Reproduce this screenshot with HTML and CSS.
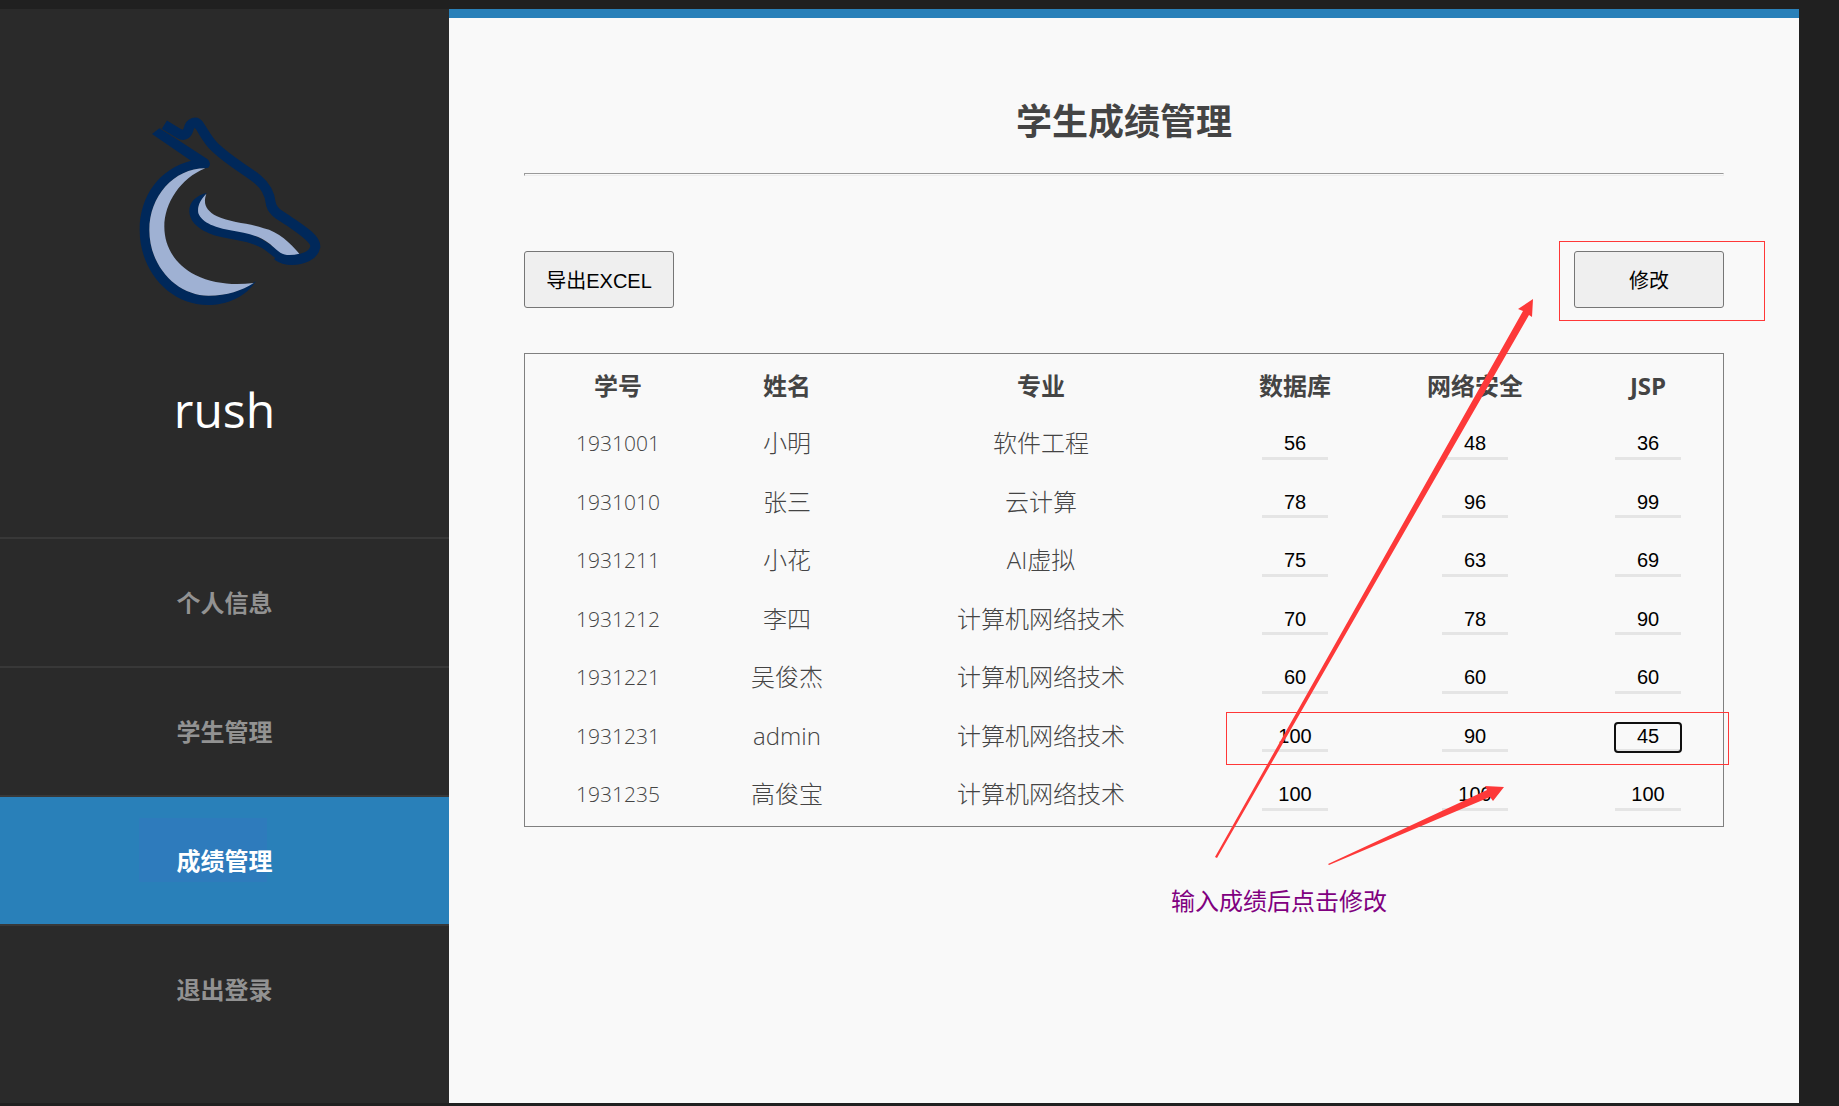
FILE: index.html
```html
<!DOCTYPE html>
<html lang="zh-CN">
<head>
<meta charset="utf-8">
<title>学生成绩管理</title>
<link rel="stylesheet" href="styles.css">
</head>
<body>
<div class="app">
  <aside class="sidebar">
    <div class="profile">
      <svg class="logo" viewBox="-16 0 660 660" aria-hidden="true">
        <path fill="#00285a" d="M95 102L118 84L262 178Q275 190 264 203L255 205C160 205 87 290 87 390C87 500 170 587 265 587C320 587 365 572 407 543C375 592 320 615 262 615C150 615 58 515 58 390C58 285 120 205 212 182Z"/>
        <path fill="#9fb1d3" d="M255 205C160 205 87 290 87 390C87 500 170 587 265 587C320 587 365 572 400 549C340 556 280 552 225 525C165 495 132 440 132 380C132 310 180 235 255 205Z"/>
        <path fill="none" stroke="#00285a" stroke-width="30" stroke-linejoin="round" d="M132 74L176 101Q195 112 204 90C210 65 228 62 238 78C252 98 262 122 285 143C330 186 375 208 412 238C435 257 448 282 451 308C454 335 482 347 505 363C545 391 586 416 585 440C580 468 545 480 515 480C495 480 484 476 470 466"/>
        <path fill="none" stroke="#2a2a2a" stroke-width="2" d="M114 82L180 122"/>
        <path fill="#00285a" d="M260 278C225 287 205 308 207 336C210 372 245 395 290 408C340 420 390 424 425 444C455 462 470 488 515 494L540 462L500 464C470 452 450 430 410 410C370 390 300 390 262 366C220 345 230 310 260 278Z"/>
        <path fill="#9fb1d3" d="M258 281C240 300 230 318 234 340C245 370 290 384 330 391C375 399 415 405 450 433C468 448 480 464 500 465Q520 466 537 461C510 430 475 395 430 385C390 370 330 368 290 349C255 330 248 310 258 281Z"/>
      </svg>
      <div class="username">rush</div>
    </div>
    <nav class="menu">
      <a href="#">个人信息</a>
      <a href="#">学生管理</a>
      <a href="#" class="active" aria-current="page">成绩管理</a>
      <a href="#">退出登录</a>
    </nav>
  </aside>
  <main class="content">
    <h1>学生成绩管理</h1>
    <hr>
    <div class="toolbar">
      <button type="button">导出EXCEL</button>
      <button type="submit" form="scores">修改</button>
    </div>
    <form id="scores">
      <table>
        <colgroup>
          <col class="col-id"><col class="col-name"><col class="col-major"><col class="col-db"><col class="col-net"><col class="col-jsp">
        </colgroup>
        <thead>
          <tr><th>学号</th><th>姓名</th><th>专业</th><th>数据库</th><th>网络安全</th><th>JSP</th></tr>
        </thead>
        <tbody>
          <tr><td class="num">1931001</td><td>小明</td><td>软件工程</td><td><input aria-label="数据库" value="56"></td><td><input aria-label="网络安全" value="48"></td><td><input aria-label="JSP" value="36"></td></tr>
          <tr><td class="num">1931010</td><td>张三</td><td>云计算</td><td><input aria-label="数据库" value="78"></td><td><input aria-label="网络安全" value="96"></td><td><input aria-label="JSP" value="99"></td></tr>
          <tr><td class="num">1931211</td><td>小花</td><td>AI虚拟</td><td><input aria-label="数据库" value="75"></td><td><input aria-label="网络安全" value="63"></td><td><input aria-label="JSP" value="69"></td></tr>
          <tr><td class="num">1931212</td><td>李四</td><td>计算机网络技术</td><td><input aria-label="数据库" value="70"></td><td><input aria-label="网络安全" value="78"></td><td><input aria-label="JSP" value="90"></td></tr>
          <tr><td class="num">1931221</td><td>吴俊杰</td><td>计算机网络技术</td><td><input aria-label="数据库" value="60"></td><td><input aria-label="网络安全" value="60"></td><td><input aria-label="JSP" value="60"></td></tr>
          <tr><td class="num">1931231</td><td>admin</td><td>计算机网络技术</td><td><input aria-label="数据库" value="100"></td><td><input aria-label="网络安全" value="90"></td><td><input class="editing" aria-label="JSP" value="45"></td></tr>
          <tr><td class="num">1931235</td><td>高俊宝</td><td>计算机网络技术</td><td><input aria-label="数据库" value="100"></td><td><input aria-label="网络安全" value="100"></td><td><input aria-label="JSP" value="100"></td></tr>
        </tbody>
      </table>
    </form>
    <svg class="marks" aria-hidden="true">
      <g fill="none" stroke="#ff3838">
        <rect x="1110.5" y="223.5" width="205" height="79"/>
        <rect x="777.5" y="694.5" width="502" height="52"/>
      </g>
      <g fill="#fd3939">
        <path d="M766 839L1074 293L1069 291L1084 281L1083 299L1080 297L768 840Z"/>
        <path d="M879 846L1038 772L1036 768L1055 769L1044 783L1041 779L880 847Z"/>
      </g>
    </svg>
    <p class="hint">输入成绩后点击修改</p>
  </main>
</div>
</body>
</html>
```
FILE: styles.css
```css
* { box-sizing: border-box; }

body {
  margin: 0;
  background: #202020;
  color: #444;
  font-family: "Open Sans", "Noto Sans CJK SC", sans-serif;
  font-size: 24px;
}

.app {
  display: grid;
  grid-template-columns: 449px 1fr;
  min-height: 100vh;
  padding: 9px 40px 3px 0;
}

.sidebar { background: #2a2a2a; }

.profile {
  display: flex;
  flex-direction: column;
  align-items: center;
  height: 528px;
  padding-top: 91px;
}

.logo { width: 220px; height: 220px; }

.username {
  margin-top: 58px;
  color: #fff;
  font-size: 48px;
  line-height: 64px;
}

.menu a {
  display: block;
  border-top: 2px solid #383838;
  color: #929292;
  font-weight: 700;
  line-height: 127px;
  text-align: center;
  text-decoration: none;
}

.menu .active {
  background: linear-gradient(#2e7bbc, #2e7bbc) 139px 21px / 128px 64px no-repeat #2980b9;
  background-clip: padding-box;
  color: #fff;
}

.content {
  position: relative;
  border-top: 9px solid #2980b9;
  background: #f9f9f9;
  padding: 76px 75px 0;
}

h1 {
  margin: 0;
  font-size: 36px;
  line-height: 56px;
  text-align: center;
}

hr {
  height: 3px;
  margin: 23px 0 75px;
  border: 1px solid;
  border-color: #9a9a9a #eee #eee #9a9a9a;
}

.toolbar {
  display: flex;
  justify-content: space-between;
  margin-bottom: 45px;
}

button {
  width: 150px;
  height: 57px;
  border: 1px solid #767676;
  border-radius: 3px;
  background: #efefef;
  color: #000;
  font: 20px "Liberation Sans", "Noto Sans CJK SC", sans-serif;
}

table {
  width: 100%;
  table-layout: fixed;
  border: 1px solid #808080;
  border-spacing: 0;
  padding: 2px 3px 3px;
}

.col-id { width: 180px; }
.col-name { width: 158px; }
.col-major { width: 350px; }
.col-db { width: 158px; }
.col-net { width: 202px; }
.col-jsp { width: 144px; }

th, td {
  height: 58px;
  padding: 0;
  line-height: 32px;
  text-align: center;
  vertical-align: middle;
}

th { padding-top: 2px; }
tbody tr:nth-child(even) td { height: 59px; }
td { font-weight: 300; }
.num { font-size: 21px; }

input {
  display: block;
  width: 66px;
  height: 29px;
  margin: 4px auto 0;
  padding: 0;
  border: 0;
  border-bottom: 3px solid #e5e5e5;
  background: transparent;
  color: #000;
  font: 20px "Liberation Sans", sans-serif;
  text-align: center;
}

input:focus, .editing {
  outline: 2px solid #101010;
  outline-offset: -1px;
  border-radius: 3px;
}

.marks {
  position: absolute;
  top: 0;
  left: 0;
  width: 100%;
  height: 100%;
  pointer-events: none;
}

.hint {
  position: absolute;
  top: 867px;
  left: 722px;
  margin: 0;
  color: #800080;
  line-height: 32px;
}
```
